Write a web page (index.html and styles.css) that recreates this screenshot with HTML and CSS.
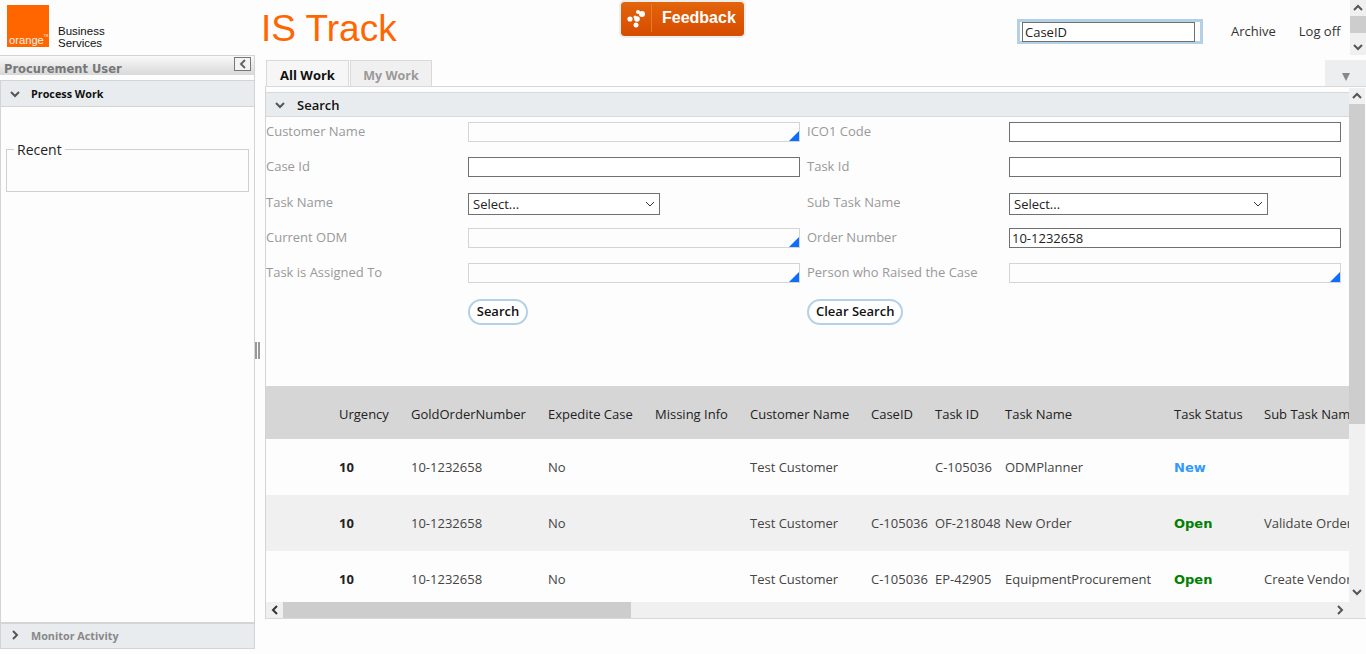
FILE: index.html
```html
<!DOCTYPE html>
<html lang="en">
<head>
    <meta charset="UTF-8">
    <title>IS Track</title>
    <link rel="stylesheet" href="styles.css">
</head>
<body>
    <header class="top">
        <div class="logo">
            <div class="logo-square"><span class="logo-word">orange<sup class="tm">TM</sup></span></div>
            <div class="logo-text">Business<br>Services</div>
        </div>
        <div class="app-title">IS Track</div>
        <button class="feedback" type="button">
            <svg class="feedback-icon" width="26" height="28" viewBox="0 0 26 28">
                <circle cx="17" cy="10" r="3" fill="#fff"/>
                <circle cx="13" cy="8" r="2" fill="#fff"/>
                <circle cx="10" cy="13" r="1.5" fill="#fff"/>
                <circle cx="5" cy="15" r="2.6" fill="#fff"/>
                <circle cx="12" cy="15" r="2.8" fill="#fff"/>
                <circle cx="11" cy="21" r="2.5" fill="#fff"/>
            </svg>
            <span class="feedback-label">Feedback</span>
        </button>
        <div class="top-search"><input class="top-input" type="text" value="CaseID"></div>
        <a class="top-link archive">Archive</a>
        <a class="top-link logoff">Log off</a>
        <div class="vbar top-bar">
            <svg class="arrow" width="16" height="16" viewBox="0 0 16 16"><path d="M4 10l4-4 4 4" fill="none" stroke="#555" stroke-width="2"/></svg>
            <div class="thumb top-thumb"></div>
            <div class="track-fill"></div>
            <svg class="arrow" width="16" height="16" viewBox="0 0 16 16"><path d="M4 6l4 4 4-4" fill="none" stroke="#555" stroke-width="2"/></svg>
        </div>
    </header>

    <div class="content">
        <aside class="side">
            <div class="side-title">
                <span class="side-name">Procurement User</span>
                <span class="collapse"><svg width="10" height="10" viewBox="0 0 10 10"><path d="M7 1L3 5l4 4" fill="none" stroke="#666" stroke-width="2"/></svg></span>
            </div>
            <div class="side-section">
                <svg class="chev" width="12" height="12" viewBox="0 0 12 12"><path d="M2 4l4 4 4-4" fill="none" stroke="#555" stroke-width="2"/></svg>
                <span>Process Work</span>
            </div>
            <div class="side-body">
                <fieldset class="recent"><legend>Recent</legend></fieldset>
            </div>
            <div class="side-section muted">
                <svg class="chev" width="12" height="12" viewBox="0 0 12 12"><path d="M4 2l4 4-4 4" fill="none" stroke="#555" stroke-width="2"/></svg>
                <span>Monitor Activity</span>
            </div>
        </aside>

        <div class="splitter"><span class="grip"></span></div>

        <main class="main">
            <div class="tabs">
                <div class="tab active">All Work</div>
                <div class="tab">My Work</div>
                <div class="tab-menu"><svg width="8" height="8" viewBox="0 0 8 8"><path d="M0 0h8L4 8z" fill="#888"/></svg></div>
            </div>
            <div class="panel">
                <div class="panel-scroll">
                    <div class="search-head">
                        <svg class="chev" width="12" height="12" viewBox="0 0 12 12"><path d="M2 4l4 4 4-4" fill="none" stroke="#555" stroke-width="2"/></svg>
                        <span>Search</span>
                    </div>
                    <form class="search-form">
                        <label>Customer Name</label>
                        <div class="lookup"></div>
                        <label>ICO1 Code</label>
                        <input class="field" type="text">

                        <label>Case Id</label>
                        <input class="field" type="text">
                        <label>Task Id</label>
                        <input class="field" type="text">

                        <label>Task Name</label>
                        <div class="select narrow">Select...<svg width="12" height="12" viewBox="0 0 12 12"><path d="M2 4l4 4 4-4" fill="none" stroke="#333" stroke-width="1"/></svg></div>
                        <label>Sub Task Name</label>
                        <div class="select wide">Select...<svg width="12" height="12" viewBox="0 0 12 12"><path d="M2 4l4 4 4-4" fill="none" stroke="#333" stroke-width="1"/></svg></div>

                        <label>Current ODM</label>
                        <div class="lookup"></div>
                        <label>Order Number</label>
                        <input class="field" type="text" value="10-1232658">

                        <label>Task is Assigned To</label>
                        <div class="lookup"></div>
                        <label>Person who Raised the Case</label>
                        <div class="lookup"></div>

                        <span></span>
                        <div class="btn-cell"><button class="pill short" type="button">Search</button></div>
                        <div class="btn-cell span2"><button class="pill" type="button">Clear Search</button></div>
                    </form>

                    <div class="grid-wrap">
                        <table class="grid">
                            <colgroup>
                                <col class="c0"><col class="c1"><col class="c2"><col class="c3"><col class="c4">
                                <col class="c5"><col class="c6"><col class="c7"><col class="c8"><col class="c9"><col class="c10">
                            </colgroup>
                            <thead>
                                <tr>
                                    <th></th><th>Urgency</th><th>GoldOrderNumber</th><th>Expedite Case</th><th>Missing Info</th>
                                    <th>Customer Name</th><th>CaseID</th><th>Task ID</th><th>Task Name</th><th>Task Status</th><th>Sub Task Name</th>
                                </tr>
                            </thead>
                            <tbody>
                                <tr>
                                    <td></td><td class="urgent">10</td><td>10-1232658</td><td>No</td><td></td>
                                    <td>Test Customer</td><td></td><td>C-105036</td><td>ODMPlanner</td>
                                    <td class="status new">New</td><td></td>
                                </tr>
                                <tr>
                                    <td></td><td class="urgent">10</td><td>10-1232658</td><td>No</td><td></td>
                                    <td>Test Customer</td><td>C-105036</td><td>OF-218048</td><td>New Order</td>
                                    <td class="status open">Open</td><td>Validate Order</td>
                                </tr>
                                <tr>
                                    <td></td><td class="urgent">10</td><td>10-1232658</td><td>No</td><td></td>
                                    <td>Test Customer</td><td>C-105036</td><td>EP-42905</td><td>EquipmentProcurement</td>
                                    <td class="status open">Open</td><td>Create Vendor</td>
                                </tr>
                            </tbody>
                        </table>
                    </div>
                </div>

                <div class="vbar main-bar">
                    <svg class="arrow" width="16" height="16" viewBox="0 0 16 16"><path d="M4 10l4-4 4 4" fill="none" stroke="#555" stroke-width="2"/></svg>
                    <div class="thumb main-thumb"></div>
                    <div class="track-fill"></div>
                    <svg class="arrow" width="16" height="16" viewBox="0 0 16 16"><path d="M4 6l4 4 4-4" fill="none" stroke="#555" stroke-width="2"/></svg>
                </div>

                <div class="hbar">
                    <svg class="arrow" width="17" height="16" viewBox="0 0 17 16"><path d="M11 4L7 8l4 4" fill="none" stroke="#333" stroke-width="2"/></svg>
                    <div class="thumb h-thumb"></div>
                    <div class="track-fill"></div>
                    <svg class="arrow" width="17" height="16" viewBox="0 0 17 16"><path d="M6 4l4 4-4 4" fill="none" stroke="#555" stroke-width="2"/></svg>
                </div>
            </div>
        </main>
    </div>
</body>
</html>
```

FILE: styles.css
```css
html, body {
    margin: 0;
    padding: 0;
    height: 654px;
    overflow: hidden;
    background-color: #fdfdfd;
    font-family: "Open Sans", sans-serif;
    font-size: 13px;
    color: #333;
}

/* header */
.top {
    display: flex;
    height: 55px;
    position: relative;
}

.logo {
    display: flex;
    width: 261px;
    padding: 5px 0 0 7px;
    box-sizing: border-box;
}

.logo-square {
    width: 42px;
    height: 42px;
    background-color: #ff6600;
    display: flex;
    align-items: flex-end;
}

.logo-word {
    color: #fff;
    font-family: "Liberation Sans", sans-serif;
    font-size: 11.2px;
    line-height: 12px;
    padding: 0 0 1px 2px;
    opacity: .9;
    white-space: nowrap;
}

.tm {
    font-size: 3px;
    line-height: 0;
    vertical-align: 7px;
}

.logo-text {
    margin: 20px 0 0 9px;
    font-family: "Liberation Sans", sans-serif;
    font-size: 11.5px;
    line-height: 12px;
    color: #111;
}

.app-title {
    width: 358px;
    padding-top: 8px;
    font-family: "Liberation Sans", sans-serif;
    font-size: 37px;
    line-height: 42px;
    color: #ff6600;
}

.feedback {
    display: flex;
    align-items: center;
    width: 127px;
    height: 38px;
    padding: 0 0 2px 4px;
    box-sizing: border-box;
    border: 2px solid #eee;
    border-radius: 5px;
    background: linear-gradient(#e2640c, #d64c00);
    background-clip: padding-box;
    color: #fff;
    font-family: "Liberation Sans", sans-serif;
    font-size: 16px;
    font-weight: bold;
}

.feedback-icon {
    margin-right: 10px;
    border-right: 1px solid #ea7a2a;
}

.top-search {
    margin: 19px 0 0 271px;
    width: 186px;
    height: 25px;
    box-sizing: border-box;
    border: 3px solid #b3d1e6;
    padding: 0 0 0 2px;
}

.top-input {
    display: block;
    width: 173px;
    height: 20px;
    box-sizing: border-box;
    border: 1px solid #707070;
    padding: 0 2px;
    font-family: "Open Sans", sans-serif;
    font-size: 13px;
    color: #222;
}

.top-link {
    margin-top: 22px;
    line-height: 18px;
    color: #333;
}

.archive { margin-left: 28px; }
.logoff { margin-left: 23px; }

/* fake scrollbars */
.vbar {
    display: flex;
    flex-direction: column;
    width: 16px;
    background-color: #f0f0f0;
}

.arrow {
    display: block;
    flex: none;
}

.thumb {
    background-color: #cdcdcd;
    flex: none;
}

.track-fill {
    flex: 1;
}

.top-bar {
    position: absolute;
    top: 0;
    right: 0;
    height: 55px;
}

.top-thumb { height: 17px; }

/* layout */
.content {
    display: flex;
    height: 594px;
}

.side {
    display: flex;
    flex-direction: column;
    width: 255px;
    box-sizing: border-box;
    border-right: 1px solid #d4d4d4;
}

.side-title {
    display: flex;
    justify-content: space-between;
    align-items: center;
    height: 20px;
    box-sizing: border-box;
    border-top: 1px solid #d4d4d4;
    padding: 0 3px 0 4px;
    background: linear-gradient(#fafafa, #d8d8d8);
    font-family: "DejaVu Sans", sans-serif;
    font-size: 11.5px;
    font-weight: bold;
    color: #777;
}

.side-name {
    padding-top: 6px;
}

.collapse {
    display: flex;
    align-items: center;
    justify-content: center;
    width: 17px;
    height: 14px;
    margin-top: -3px;
    box-sizing: border-box;
    border: 1px solid #777;
    background-color: #f4f4f4;
}

.side-section {
    display: flex;
    align-items: center;
    height: 27px;
    flex: none;
    box-sizing: border-box;
    margin-top: 5px;
    padding-left: 8px;
    border-top: 1px solid #d4d4d4;
    border-bottom: 1px solid #d4d4d4;
    border-left: 1px solid #d4d4d4;
    background-color: #e9ecef;
    font-size: 10.8px;
    font-weight: bold;
    color: #111;
}

.side-section .chev {
    margin-right: 10px;
}

.side-section.muted {
    margin-top: 0;
    border-top-width: 2px;
    padding-bottom: 2px;
    color: #888;
}

.side-body {
    flex: 1;
    border-left: 1px solid #d4d4d4;
    padding: 32px 5px 0 5px;
}

.recent {
    height: 53px;
    box-sizing: border-box;
    margin: 0;
    padding: 0;
    border: 1px solid #d0d0d0;
}

.recent legend {
    margin-left: 7px;
    padding: 2px 3px 0;
    font-size: 14px;
    line-height: 18px;
    color: #222;
}

.splitter {
    display: flex;
    align-items: center;
    width: 10px;
    padding-bottom: 3px;
    box-sizing: border-box;
}

.grip {
    display: block;
    width: 5px;
    height: 17px;
    border-left: 2px solid #999;
    border-right: 2px solid #999;
    box-sizing: border-box;
}

/* tabs */
.main {
    width: 1101px;
}

.tabs {
    display: flex;
    height: 32px;
    box-sizing: border-box;
    padding: 5px 0 0 1px;
    border-bottom: 1px solid #d9d9d9;
    font-size: 12.5px;
    font-weight: bold;
    color: #999;
}

.tab {
    width: 82px;
    height: 26px;
    margin-right: 2px;
    box-sizing: border-box;
    border: 1px solid #d9d9d9;
    border-bottom: 0;
    background-color: #f0f0f0;
    line-height: 29px;
    text-align: center;
}

.tab.active {
    width: 83px;
    margin-right: 1px;
    background-color: #f6f6f6;
    font-size: 13px;
    color: #111;
}

.tab-menu {
    width: 41px;
    height: 26px;
    box-sizing: border-box;
    padding: 13px 0 0 17px;
    margin-left: auto;
    background-color: #eceef0;
}

.tab-menu svg {
    display: block;
}

/* panel */
.panel {
    position: relative;
    height: 532px;
    border-left: 1px solid #d4d4d4;
    border-bottom: 1px solid #d9d9d9;
    box-sizing: border-box;
}

.panel-scroll {
    height: 515px;
    padding-top: 5px;
    box-sizing: border-box;
    overflow: hidden;
}

.search-head {
    display: flex;
    align-items: center;
    height: 25px;
    width: 1083px;
    box-sizing: border-box;
    padding-left: 8px;
    border-bottom: 1px solid #d9d9d9;
    border-top: 1px solid #d9d9d9;
    background-color: #e9ecef;
    font-weight: 600;
    color: #111;
}

.search-head .chev {
    margin-right: 11px;
}

.search-form {
    display: grid;
    grid-template-columns: 202px 332px 7px 202px 332px;
    grid-template-rows: 35px 36px 35px 35px 36px 26px;
    margin-top: 5px;
    height: 264px;
    align-content: start;
}

.search-form label {
    color: #999;
    line-height: 18px;
}

.search-form > label:nth-of-type(2n) {
    grid-column: 4;
}

.search-form > label:nth-of-type(2n+1) {
    grid-column: 1;
}

.field, .lookup {
    width: 332px;
    height: 20px;
    box-sizing: border-box;
    font-family: "Open Sans", sans-serif;
    font-size: 13px;
    color: #222;
}

.field {
    border: 1px solid #707070;
    padding: 0 2px;
    background-color: #fff;
}

.lookup {
    position: relative;
    border: 1px solid #d4d4d4;
    background-color: #fdfdfd;
}

.lookup::after {
    content: "";
    position: absolute;
    right: 0;
    bottom: 0;
    border-style: solid;
    border-width: 0 0 10px 10px;
    border-color: transparent transparent #0d6efd transparent;
}

.select {
    display: flex;
    align-items: center;
    justify-content: space-between;
    height: 22px;
    box-sizing: border-box;
    border: 1px solid #707070;
    padding: 0 3px 0 4px;
    background-color: #fff;
    color: #222;
}

.narrow { width: 192px; }
.wide { width: 259px; }

.btn-cell {
    grid-column: 2;
}

.btn-cell.span2 {
    grid-column: 4;
}

.pill {
    height: 26px;
    box-sizing: border-box;
    padding: 0 7px 2px;
    border: 2px solid #b3d1e6;
    border-radius: 13px;
    background-color: #fff;
    font-family: "Open Sans", sans-serif;
    font-size: 13px;
    font-weight: 600;
    color: #111;
}

.pill.short {
    width: 60px;
    padding: 0 0 2px;
}

/* results */
.grid-wrap {
    width: 1083px;
    overflow: hidden;
}

.grid {
    width: 1198px;
    table-layout: fixed;
    border-collapse: collapse;
}

.c0 { width: 73px; }
.c1 { width: 72px; }
.c2 { width: 137px; }
.c3 { width: 107px; }
.c4 { width: 95px; }
.c5 { width: 121px; }
.c6 { width: 64px; }
.c7 { width: 70px; }
.c8 { width: 169px; }
.c9 { width: 90px; }
.c10 { width: 200px; }

.grid th {
    height: 50px;
    padding: 3px 0 0 0;
    background-color: #d6d6d6;
    font-weight: normal;
    text-align: left;
    white-space: nowrap;
    color: #222;
}

.grid td {
    height: 56px;
    padding: 0;
    white-space: nowrap;
    color: #444;
}

.grid tbody tr:nth-child(even) td {
    background-color: #f0f0f0;
}

.grid td.urgent {
    font-weight: bold;
    color: #222;
}

.grid td.status {
    font-family: "DejaVu Sans", sans-serif;
    font-weight: bold;
}

.grid td.new { color: #3399ff; }
.grid td.open { color: #008000; }

.main-bar {
    position: absolute;
    top: 1px;
    right: 1px;
    height: 530px;
    box-sizing: border-box;
    padding-bottom: 18px;
}

.main-thumb { height: 320px; }

.hbar {
    display: flex;
    height: 16px;
    width: 1083px;
    background-color: #f0f0f0;
}

.h-thumb { width: 348px; }
```
